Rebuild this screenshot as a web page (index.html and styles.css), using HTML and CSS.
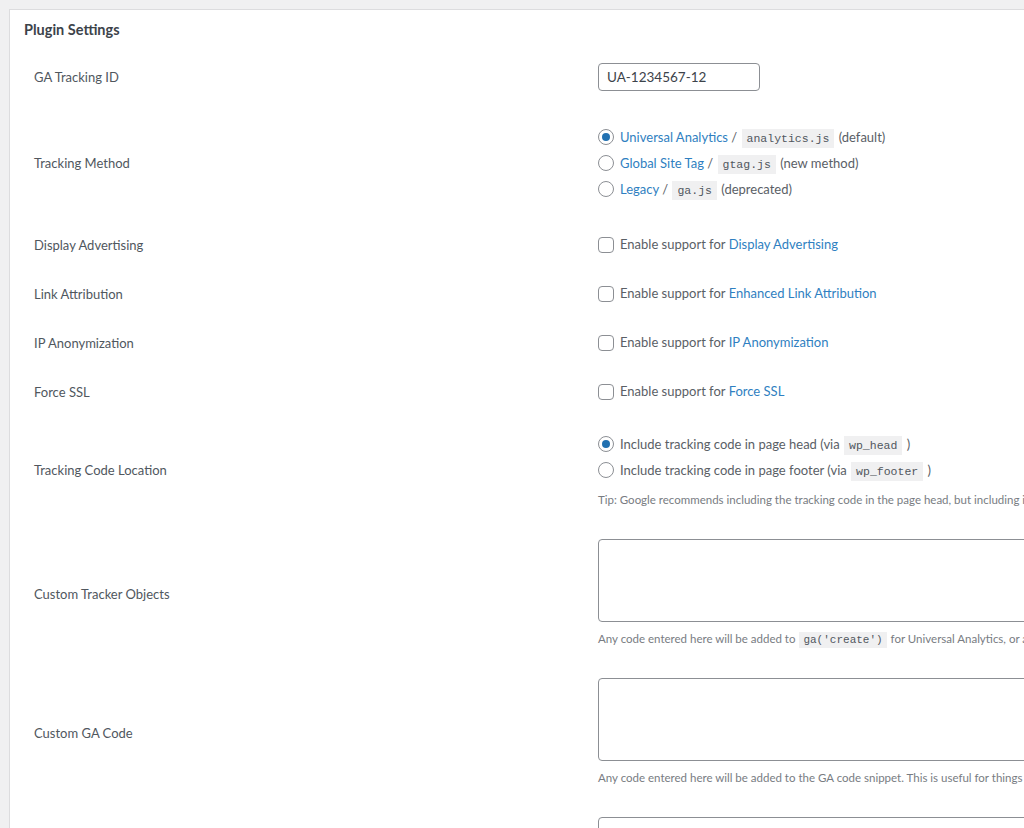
FILE: index.html
```html
<!DOCTYPE html>
<html lang="en">
<head>
  <meta charset="UTF-8" />
  <meta name="viewport" content="width=device-width, initial-scale=1.0" />
  <title>Plugin Settings</title>
  <link rel="stylesheet" href="styles.css">
</head>
<body>
  <div class="wrap">
    <div class="panel">
      <h2 class="panel-title">Plugin Settings</h2>
      <table class="form-table">
        <tr>
          <th>GA Tracking ID</th>
          <td><input type="text" class="text-input" value="UA-1234567-12" /></td>
        </tr>
        <tr>
          <th>Tracking Method</th>
          <td>
            <div class="radio-list">
              <label class="opt"><span class="radio checked"></span><span><a href="#">Universal Analytics</a> / <code>analytics.js</code> (default)</span></label>
              <label class="opt"><span class="radio"></span><span><a href="#">Global Site Tag</a> / <code>gtag.js</code> (new method)</span></label>
              <label class="opt"><span class="radio"></span><span><a href="#">Legacy</a> / <code>ga.js</code> (deprecated)</span></label>
            </div>
          </td>
        </tr>
        <tr class="compact">
          <th>Display Advertising</th>
          <td><label class="opt"><span class="check"></span><span>Enable support for <a href="#">Display Advertising</a></span></label></td>
        </tr>
        <tr class="compact">
          <th>Link Attribution</th>
          <td><label class="opt"><span class="check"></span><span>Enable support for <a href="#">Enhanced Link Attribution</a></span></label></td>
        </tr>
        <tr class="compact">
          <th>IP Anonymization</th>
          <td><label class="opt"><span class="check"></span><span>Enable support for <a href="#">IP Anonymization</a></span></label></td>
        </tr>
        <tr class="compact">
          <th>Force SSL</th>
          <td><label class="opt"><span class="check"></span><span>Enable support for <a href="#">Force SSL</a></span></label></td>
        </tr>
        <tr>
          <th>Tracking Code Location</th>
          <td>
            <label class="opt"><span class="radio checked"></span><span>Include tracking code in page head (via <code>wp_head</code> )</span></label>
            <label class="opt"><span class="radio"></span><span>Include tracking code in page footer (via <code>wp_footer</code> )</span></label>
            <p class="description">Tip: Google recommends including the tracking code in the page head, but including it in the footer can improve page load times.</p>
          </td>
        </tr>
        <tr>
          <th>Custom Tracker Objects</th>
          <td>
            <textarea class="code-box"></textarea>
            <p class="description">Any code entered here will be added to <code>ga('create')</code> for Universal Analytics, or added to <code>gtag('config')</code> for Global Site Tag.</p>
          </td>
        </tr>
        <tr>
          <th>Custom GA Code</th>
          <td>
            <textarea class="code-box"></textarea>
            <p class="description">Any code entered here will be added to the GA code snippet. This is useful for things like creating multiple trackers and user opt-out.</p>
          </td>
        </tr>
        <tr>
          <th>Custom Code</th>
          <td><textarea class="code-box"></textarea></td>
        </tr>
      </table>
    </div>
  </div>
</body>
</html>
```

FILE: styles.css
```css
* { margin: 0; padding: 0; box-sizing: border-box; }
body {
  background: #f0f0f1;
  font-family: Lato, "Open Sans", sans-serif;
  font-size: 13px;
  color: #5a6066;
  overflow: hidden;
  height: 828px;
}
.wrap { padding: 9px 0 0 9px; }
.panel {
  width: 1300px;
  background: #fff;
  border: 1px solid #dcdcde;
  padding: 0 14px;
}
.panel-title {
  font-size: 14.5px;
  font-weight: bold;
  color: #3c434a;
  line-height: 20px;
  padding-top: 10px;
  margin-bottom: 8px;
}
.form-table { border-collapse: collapse; }
.form-table th {
  width: 574px;
  text-align: left;
  font-weight: normal;
  color: #50575e;
  padding: 15px 10px;
  vertical-align: middle;
}
.form-table td { padding: 15px 0; vertical-align: top; }
.form-table tr.compact th,
.form-table tr.compact td { padding-top: 12px; padding-bottom: 12px; }

a { color: #2f7fc1; text-decoration: none; }
code {
  font-family: "Liberation Mono", monospace;
  font-size: 11.5px;
  line-height: 13px;
  background: #f0f0f1;
  padding: 3px 5px;
  margin: 0 1px;
  color: #50575e;
}

.text-input {
  display: block;
  width: 162px;
  height: 28px;
  border: 1px solid #8c8f94;
  border-radius: 4px;
  padding: 0 8px;
  font: inherit;
  font-size: 13.5px;
  color: #3c434a;
}

.radio-list { padding: 3px 0; }
.opt {
  display: flex;
  align-items: center;
  height: 26px;
  line-height: 26px;
  white-space: nowrap;
}
.compact .opt { height: 25px; line-height: 25px; }
.radio, .check {
  width: 16px;
  height: 16px;
  border: 1px solid #8c8f94;
  margin-right: 6px;
  flex-shrink: 0;
  background: #fff;
}
.radio { border-radius: 50%; position: relative; }
.radio.checked::after {
  content: "";
  position: absolute;
  left: 3px;
  top: 3px;
  width: 8px;
  height: 8px;
  border-radius: 50%;
  background: #2271b1;
}
.check { border-radius: 4px; }

.description {
  margin-top: 8px;
  line-height: 18px;
  font-size: 11.5px;
  color: #787c82;
  white-space: nowrap;
}
.description code { font-size: 11px; padding: 2px 4px; }

.code-box {
  display: block;
  width: 640px;
  height: 83px;
  border: 1px solid #8c8f94;
  border-radius: 4px;
  resize: none;
}
```
